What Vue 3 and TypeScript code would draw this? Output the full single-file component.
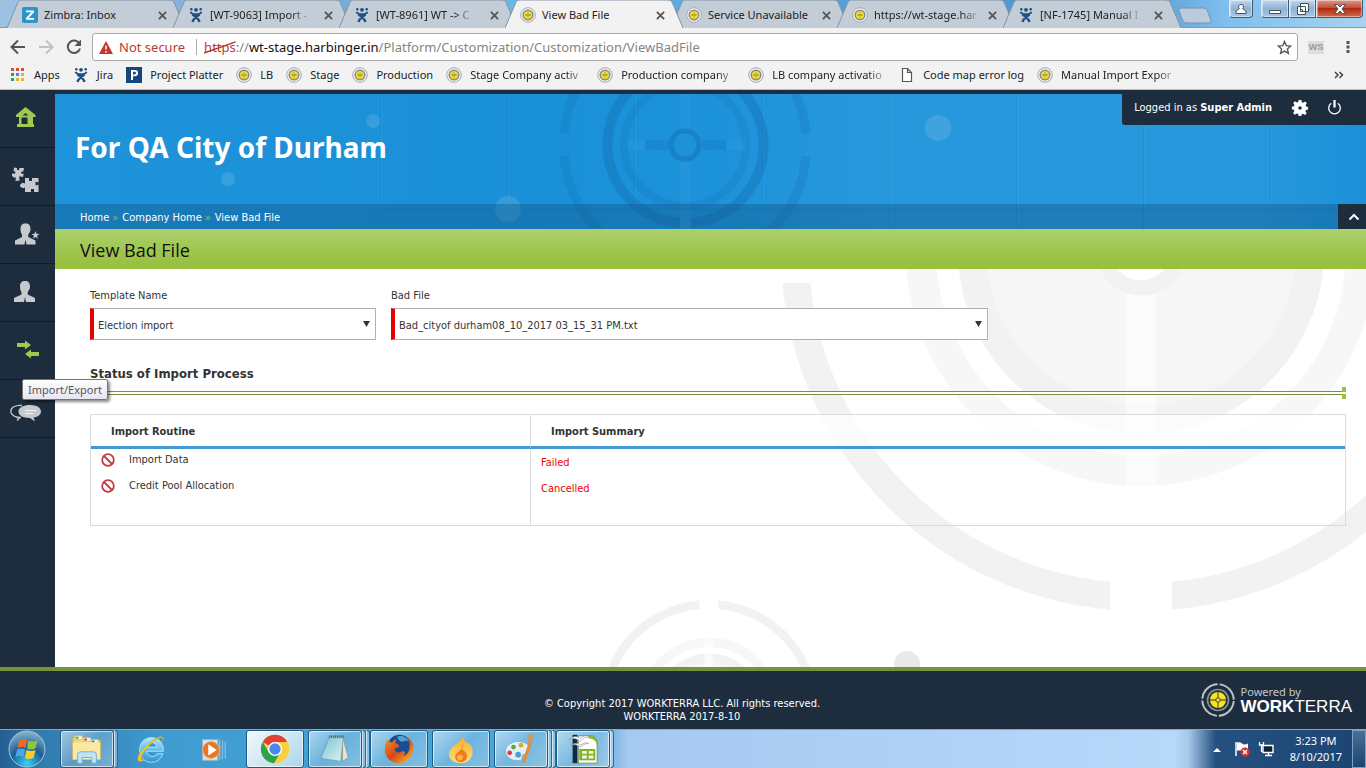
<script setup lang="ts">
import { ref } from 'vue'

type Tab = { title: string; icon: string; active?: boolean; faded?: boolean }
type Bookmark = { title: string; icon: string; faded?: boolean }
type Routine = { name: string; summary: string }

const tabs: Tab[] = [
  { title: 'Zimbra: Inbox', icon: 'zimbra' },
  { title: '[WT-9063] Import -', icon: 'jira', faded: true },
  { title: '[WT-8961] WT -> C', icon: 'jira', faded: true },
  { title: 'View Bad File', icon: 'target', active: true },
  { title: 'Service Unavailable', icon: 'target' },
  { title: 'https://wt-stage.har', icon: 'target', faded: true },
  { title: '[NF-1745] Manual I', icon: 'jira', faded: true },
]

const bookmarks: Bookmark[] = [
  { title: 'Apps', icon: 'apps' },
  { title: 'Jira', icon: 'jira' },
  { title: 'Project Platter', icon: 'platter' },
  { title: 'LB', icon: 'target' },
  { title: 'Stage', icon: 'target' },
  { title: 'Production', icon: 'target' },
  { title: 'Stage Company activ', icon: 'target', faded: true },
  { title: 'Production company', icon: 'target', faded: true },
  { title: 'LB company activatio', icon: 'target', faded: true },
  { title: 'Code map error log', icon: 'file' },
  { title: 'Manual Import Expor', icon: 'target', faded: true },
]

const menu = [
  { label: 'Home', icon: 'home' },
  { label: 'Modules', icon: 'puzzle' },
  { label: 'Administrators', icon: 'userstar' },
  { label: 'Employees', icon: 'user' },
  { label: 'Import/Export', icon: 'swap' },
  { label: 'Messages', icon: 'chat' },
]

const routines: Routine[] = [
  { name: 'Import Data', summary: 'Failed' },
  { name: 'Credit Pool Allocation', summary: 'Cancelled' },
]

const apps = [
  { label: 'Windows Explorer', icon: 'explorer', open: true, stack: 1 },
  { label: 'Internet Explorer', icon: 'ie' },
  { label: 'Media Player', icon: 'media' },
  { label: 'Google Chrome', icon: 'chrome', open: true, current: true },
  { label: 'Notepad', icon: 'notepad', open: true, stack: 2 },
  { label: 'Firefox', icon: 'firefox', open: true },
  { label: 'Flame', icon: 'flame', open: true },
  { label: 'Paint', icon: 'paint', open: true, stack: 2 },
  { label: 'Calc', icon: 'calc', open: true, stack: 1 },
]

const seams = [380, 507, 634, 762, 889, 1016, 1143, 1270]
const address = ref('wt-stage.harbinger.in')
const template = ref('Election import')
const badFile = ref('Bad_cityof durham08_10_2017 03_15_31 PM.txt')
</script>

<template>
  <div class="screen">
    <svg class="defs" aria-hidden="true">
      <defs>
        <linearGradient id="tb" x1="0" y1="0" x2="0" y2="1"><stop offset="0" stop-color="#a5e8ff" /><stop offset="1" stop-color="#2a93dc" /></linearGradient>
        <linearGradient id="sheet" x1="0" y1="0" x2="1" y2="1"><stop offset="0" stop-color="#7cc3cf" /><stop offset="1" stop-color="#d9f3f4" /></linearGradient>
        <radialGradient id="orb" cx=".5" cy=".9" r=".9"><stop offset="0" stop-color="#35d3f5" /><stop offset=".5" stop-color="#1c5d96" /><stop offset="1" stop-color="#8fb6cc" /></radialGradient>
        <linearGradient id="fox" x1="0" y1="0" x2="1" y2="1"><stop offset="0" stop-color="#f7941e" /><stop offset=".5" stop-color="#d6471d" /><stop offset="1" stop-color="#fbc92e" /></linearGradient>
        <linearGradient id="fire" x1="0" y1="0" x2="0" y2="1"><stop offset="0" stop-color="#f7a623" /><stop offset="1" stop-color="#fde07a" /></linearGradient>
      </defs>
      <symbol id="i-zimbra" viewBox="0 0 16 16"><rect width="16" height="16" rx="2" fill="#2c94c9" /><path d="M4 3.500h8v1.800L6.700 11H12v1.800H4V11l5.300-5.700H4z" fill="#fff" /></symbol>
      <symbol id="i-jira" viewBox="0 0 16 16"><circle cx="8" cy="2.800" r="1.900" fill="#205081" /><circle cx="3.300" cy="2.200" r="1.300" fill="#205081" /><circle cx="12.700" cy="2.200" r="1.300" fill="#205081" /><path d="M2.500 4.800c.8 2 3 2.200 5.500 4.200 2.500-2 4.700-2.200 5.500-4.200" fill="none" stroke="#205081" stroke-width="1.900" /><path d="M5 6.300h6L8 9.500z" fill="#205081" /><path d="M11.500 7.500C9 9.500 5 11.500 4.600 15M4.500 7.500C7 9.500 11 11.500 11.400 15" fill="none" stroke="#205081" stroke-width="2.300" /></symbol>
      <symbol id="i-target" viewBox="0 0 16 16"><circle cx="8" cy="8" r="7.300" fill="#f3f3f1" stroke="#a8a8a8" stroke-width="1" /><circle cx="8" cy="8" r="4.800" fill="#eadc3a" stroke="#8c8c88" stroke-width="1.500" /><path d="M5.500 8h5" stroke="#8f8122" stroke-width="1.200" /><path d="M8 4.500v7" stroke="#c4b42b" stroke-width="1" /></symbol>
      <symbol id="i-apps" viewBox="0 0 16 16"><path d="M1 1h3v3H1zM6 1h3v3H6zM11 1h3v3h-3z" fill="#dd4b39" /><path d="M1 6h3v3H1z" fill="#23a566" /><path d="M6 6h3v3H6z" fill="#4587f3" /><path d="M11 6h3v3h-3zM6 11h3v3H6zM11 11h3v3h-3z" fill="#efb02b" /><path d="M1 11h3v3H1z" fill="#23a566" /></symbol>
      <symbol id="i-platter" viewBox="0 0 16 16"><rect width="16" height="16" fill="#14457d" /><path d="M5 3h4a3 3 0 0 1 0 6.200H7V13H5zM7 4.800v2.600h1.600a1.300 1.300 0 0 0 0-2.600z" fill="#fff" fill-rule="evenodd" /></symbol>
      <symbol id="i-file" viewBox="0 0 16 16"><path d="M3.500 1.500h5l4 4v9h-9zM8.500 1.500v4h4" fill="#fff" stroke="#555" stroke-width="1.200" /></symbol>

      <symbol id="i-home" viewBox="0 0 32 32"><path d="M15.500 4l10 8v2h-2.500v7h1v3H7v-3h2v-7H6v-2zM11.500 14.500V21h6v-6.500zM12.500 12.500h6l-3-2.500z" fill="#a0c950" fill-rule="evenodd" /></symbol>
      <symbol id="i-puzzle" viewBox="0 0 32 32"><g transform="translate(0 4)" fill="#c6cacf"><path d="M4 2.500l3 .5v2h2l.5-2H14l-.7 3.500h-2v2.300h2.400L13 12l-3.500-.8-.3 2 .6 2.300-4.300.5.400-3.500H3.500L2 10.500V8.500l3 .3.500-2L3.600 6z" /><path d="M15 13h4v3h3v-3h6.500v4.500l-3-.8v3.800l3-.8V27H24v-3h-3v3h-6v-4.500l-2 .8-2.800-1.500v-2.300l2.300-1.700 2.500.7z" /></g></symbol>
      <symbol id="i-user" viewBox="0 0 32 32"><path d="M15 4c3.500 0 5 2 5 5.500 0 2-1 4-2.300 5.500v2.500L25 21v4H16l-1-5-1 5H4v-4l7.500-3.500V15C10.500 14 10 11.500 10 9.500 10 6 11.500 4 15 4z" fill="#c6cacf" /></symbol>
      <symbol id="i-userstar" viewBox="0 0 32 32"><path d="M15.500 4.500c3.500 0 5 2 5 5.500 0 2-1 4-2.300 5.500V18l7.300 3.500v4H16.500l-1-5-1 5H5v-4L12 18v-2.500C11 14.500 10.500 12 10.500 10c0-3.500 1.500-5.500 5-5.500z" fill="#c6cacf" /><path d="M25.500 12l1 2.800 3 .1-2.400 1.900.9 2.900-2.500-1.700-2.500 1.700.9-2.900-2.400-1.900 3-.1z" fill="#c6cacf" /></symbol>
      <symbol id="i-swap" viewBox="0 0 32 32"><path d="M7 8h8V5.500l6 4.500-6 4.500v-2.500H7zM29 17h-8v-2.500l-6 4.500 6 4.500v-2.500h8z" fill="#a0c950" /></symbol>
      <symbol id="i-chat" viewBox="0 0 32 32"><g transform="translate(0 3)"><path d="M12 9.500C5 8.500.8 12 .8 15.500c0 2.500 2 4 5.200 5.500 2 .5 2 .5 4 .5l-3 3" fill="none" stroke="#c6cacf" stroke-width="1.300" /><path d="M20 9c6.500 0 11 2.800 11 6.500 0 3-3 5.500-7.500 6l1.500 4-5-3.600C13 22 8.500 19.500 8.500 15.500S13.500 9 20 9z" fill="#c6cacf" /><path d="M15 14.500h11M15 17.500h8" stroke="#f2f3f4" stroke-width="1.200" /></g></symbol>

      <symbol id="i-explorer" viewBox="0 0 36 36"><path d="M3 6h11l2 3h16v20H3z" fill="#f1d77c" stroke="#d7b14c" /><path d="M5 4h8v4H5zM14 6h8v4h-8zM22 8h8v4h-8z" fill="#fbf3d0" stroke="#d3b765" stroke-width=".6" /><path d="M6 5h3v2H6z" fill="#36b034" /><path d="M15 7h3v2h-3z" fill="#d4442d" /><path d="M23 9h3v2h-3z" fill="#2f7ed0" /><path d="M3 11h29v18H3z" fill="#fae9a4" /><path d="M8 33V24q0-3 3-3h14q3 0 3 3v9h-5v-6H13v6z" fill="#bfe4f5" stroke="#69b4d9" /></symbol>
      <symbol id="i-ie" viewBox="0 0 36 36"><path d="M31 20.500H13.500c.5 6.500 9 7 11 2.500H30.500c-2 6-6.500 9-12 9C10.500 32 6 26.500 6 19S11 6 18.500 6 31.500 11 31 20.500zM13.700 16h10.600c-.5-6-9.800-6.500-10.600 0z" fill="url(#tb)" stroke="#e2f7ff" stroke-width=".7" fill-rule="evenodd" /><path d="M30.500 11c2.500-6-1-8-7.500-4C14 12 5 22 4 28c-.5 4 4 4 8 1-4 1-6 0-4-4C12 17 21 8.500 26.500 6.500c4-1 5 .5 4 4.500z" fill="#f5c92b" stroke="#d19b17" stroke-width=".5" /></symbol>
      <symbol id="i-media" viewBox="0 0 36 36"><path d="M7 8h16v22H7z" fill="#d5e5ef" stroke="#91b8cd" /><path d="M25 8v22M28 9v20M31 10v18" stroke="#8bb9d4" stroke-width="1.500" /><circle cx="16" cy="19" r="9" fill="#e87722" stroke="#f7b37c" /><path d="M13 13l9 6-9 6z" fill="#fff" /></symbol>
      <symbol id="i-chrome" viewBox="0 0 36 36"><circle cx="18" cy="18" r="15" fill="#fcce3c" /><path d="M18 18L5 10.500A15 15 0 0 1 31 10.500H18z" fill="#dd4437" /><path d="M5 10.500A15 15 0 0 0 17 33l6.500-11.200L18 18l-6.500 3.800z" fill="#2ba24c" /><circle cx="18" cy="18" r="7.500" fill="#fff" /><circle cx="18" cy="18" r="6" fill="#4886f0" /></symbol>
      <symbol id="i-notepad" viewBox="0 0 36 36"><path d="M26 5l6 22-6 4z" fill="#e9e3cf" stroke="#92877a" stroke-width=".6" /><path d="M12 5h15L24 31 3 28z" fill="url(#sheet)" stroke="#628a91" stroke-width=".6" /><path d="M12 5h15" stroke="#566" stroke-width="3" stroke-dasharray="1 1" /></symbol>
      <symbol id="i-firefox" viewBox="0 0 36 36"><circle cx="18.500" cy="16" r="13" fill="#1d4c8e" /><path d="M16 5c4-2 10 0 12 5-4-2-5 1-8 0-2-1-3-2-4-5z" fill="#4fa2d8" /><path d="M6 8c1 2 3 3 5 3 1-2 2-3 4-3l-1 4c3 1 5 2 4 4l-5 2c2 5 7 4 9 2 3 0 3 3 0 5 4 0 7-4 7-8 1-5-1-9-4-12 6 2 9 8 8 14-1 8-7 14-15 14S3 27 3 19C3 15 4 11 6 8z" fill="url(#fox)" /></symbol>
      <symbol id="i-flame" viewBox="0 0 36 36"><path d="M20 2c-2 4 1 7 6 10 8 6 5 21-8 21C6 33 3 24 7 18 11 12 20 11 20 2z" fill="url(#fire)" /><path d="M20 14c-4 4 2 5 4 9 2 5-2 9-6 9-5 0-8-5-5-9 2-3 7-4 7-9z" fill="#ee7b1e" /><circle cx="17" cy="27" r="3" fill="#fbb441" /></symbol>
      <symbol id="i-paint" viewBox="0 0 36 36"><path d="M3 25C-2 17 6 10 15 10c8 0 13 4 12 10-1 5-5 3-7 4s1 6-4 6c-5 1-10-1-13-5z" fill="#e1eff8" stroke="#84aecb" /><circle cx="6" cy="22" r="2.500" fill="#d93c3c" /><circle cx="10" cy="16" r="2.500" fill="#59a83c" /><circle cx="18" cy="14" r="2.500" fill="#e4a51d" /><circle cx="15" cy="24" r="3" fill="#519dd0" /><path d="M27 9l3 2-8 22-3-1z" fill="#e58b34" /><path d="M26 3c4-2 7 0 5 3l-2 6-4-2c1-3-1-4 1-7z" fill="#c79873" /></symbol>
      <symbol id="i-calc" viewBox="0 0 36 36"><path d="M7 3h5v30H7z" fill="#132941" /><path d="M13 4h16l4 6v23H13z" fill="#fff" stroke="#758c55" /><path d="M24 4h5l4 6v5C32 9 29 7 24 7z" fill="#84ba2c" /><path d="M14 18h17v12H14z" fill="#82b329" /><path d="M17 20h5v3h-5zM24 20h5v3h-5zM17 25h5v3h-5zM24 25h5v3h-5z" fill="#f2f8df" /><path d="M3 8q7-6 12-1 5-5 9-2-5 0-9 5-5-5-12-2M5 14q6-4 10 0 5-4 9-2-5 0-9 4-4-4-10-2" fill="#fff" stroke="#7b8a92" stroke-width=".6" /></symbol>
    </svg>

    <!-- Browser frame -->
    <header class="browser">
      <div class="tabstrip">
        <nav class="tabs" aria-label="Tabs">
          <div v-for="tab in tabs" :key="tab.title" class="tab" :class="{ active: tab.active }">
            <svg class="tab-shape" viewBox="0 0 178 28" preserveAspectRatio="none"><path d="M0 28L11 2q1-2 3-2h149q3 0 4 2l11 26" vector-effect="non-scaling-stroke" /></svg>
            <svg class="fav"><use :href="'#i-' + tab.icon" /></svg>
            <a href="#" class="tab-title"><span :class="{ faded: tab.faded }">{{ tab.title }}</span></a>
            <button class="tab-close" aria-label="Close tab"><svg viewBox="0 0 10 10"><path d="M1 1l8 8M9 1L1 9" /></svg></button>
          </div>
        </nav>
        <button class="new-tab" aria-label="New tab"><svg viewBox="0 0 34 17"><path d="M3 1h22q3 0 4 2l4 10q1 3-2 3H9q-3 0-4-2L1 4q-1-3 2-3z" /></svg></button>
        <div class="window-controls">
          <button class="wc person" aria-label="Profile"><svg viewBox="0 0 12 12"><path d="M6 1.500a2.200 2.200 0 0 1 1.500 4L11 8v2.500H1V8l3.500-2.500A2.200 2.200 0 0 1 6 1.500z" /></svg></button>
          <button class="wc mini" aria-label="Minimize"><svg viewBox="0 0 14 12"><path d="M1.500 7.500h11v3h-11z" /></svg></button>
          <button class="wc restore" aria-label="Restore"><svg viewBox="0 0 14 12"><path d="M4.500 .5h8v8h-8zM1.500 3.500h8v8h-8zM4.500 6.500h2v2h-2z" /></svg></button>
          <button class="wc close" aria-label="Close"><svg viewBox="0 0 14 12"><path d="M1.500 1.500h3L7 4l2.500-2.500h3L9 6l3.500 4.500h-3L7 8l-2.500 2.500h-3L5 6z" /></svg></button>
        </div>
      </div>

      <div class="toolbar">
        <button class="tool" aria-label="Back"><svg viewBox="0 0 16 16"><path d="M15 8H2M8 1.500L1.500 8 8 14.500" /></svg></button>
        <button class="tool dim" aria-label="Forward"><svg viewBox="0 0 16 16"><path d="M1 8h13M8 1.500L14.500 8 8 14.500" /></svg></button>
        <button class="tool" aria-label="Reload"><svg viewBox="0 0 16 16"><path d="M13.300 4.500A6.200 6.200 0 1 0 14 9.500" /><path d="M15 .5V7H8.500z" fill="#555" stroke="none" /></svg></button>
        <div class="omnibox">
          <svg class="warn" viewBox="0 0 14 13"><path d="M7 0l7 13H0z" fill="#c0392b" /><path d="M7 4.500v4M7 10v1.500" stroke="#fff" stroke-width="1.500" /></svg>
          <span class="insecure">Not secure</span>
          <span class="url" :title="address"><s class="scheme">https<svg viewBox="0 0 33 14" preserveAspectRatio="none"><path d="M0 13L33 1" /></svg></s><i>://</i>wt-stage.harbinger.in<i>/Platform/Customization/Customization/ViewBadFile</i></span>
          <button class="star" aria-label="Bookmark"><svg viewBox="0 0 16 16"><path d="M8 1.500l1.900 4.500 4.800.4-3.600 3.200 1.100 4.700L8 11.800l-4.200 2.500 1.100-4.700L1.300 6.400 6.100 6z" /></svg></button>
        </div>
        <button class="ws" aria-label="Extension">WS</button>
        <button class="dots" aria-label="Menu"><svg viewBox="0 0 4 14"><path d="M.5 1h3v3h-3zM.5 5.500h3v3h-3zM.5 10h3v3h-3z" /></svg></button>
      </div>

      <nav class="bookmarks" aria-label="Bookmarks">
        <a v-for="b in bookmarks" :key="b.title" href="#" class="bookmark">
          <svg class="fav"><use :href="'#i-' + b.icon" /></svg>
          <span :class="{ faded: b.faded, cut: b.faded }">{{ b.title }}</span>
        </a>
        <button class="more" aria-label="More bookmarks"><svg viewBox="0 0 10 8"><path d="M1 1l3 3-3 3M5.500 1l3 3-3 3" /></svg></button>
      </nav>
    </header>

    <!-- Web page -->
    <div class="page">
      <nav class="sidebar" aria-label="Main menu">
        <a v-for="m in menu" :key="m.label" href="#" class="side-item" :aria-label="m.label">
          <svg><use :href="'#i-' + m.icon" /></svg>
          <span v-if="m.label === 'Import/Export'" class="tooltip" role="tooltip">{{ m.label }}</span>
        </a>
      </nav>

      <main class="main">
        <section class="banner">
          <svg class="banner-art" viewBox="55 94 1311 135" preserveAspectRatio="xMinYMin slice" aria-hidden="true">
            <g v-for="x in seams" :key="x"><path :d="`M${x}.5 94v135`" stroke="#0d7fc4" stroke-opacity=".3" /><path :d="`M${x + 1}.5 94v135`" stroke="#57b2e8" stroke-opacity=".2" /></g>
            <path d="M380 209.500h986" stroke="#0d6ba8" stroke-opacity=".3" />
            <g fill="none" stroke="#136fae">
              <path d="M564 134A121.500 121.500 0 0 1 674 24M696 24A121.500 121.500 0 0 1 806 134M806 156A121.500 121.500 0 0 1 696 266M674 266A121.500 121.500 0 0 1 564 156" stroke-width="9" stroke-opacity=".25" />
              <path d="M680 223A78 78 0 1 1 691 223" stroke-width="10" stroke-opacity=".4" />
              <circle cx="685" cy="145" r="61" stroke-width="8" stroke-opacity=".2" />
              <circle cx="685" cy="145" r="14" stroke-width="5" stroke-opacity=".45" />
              <path d="M645 145h24M702 145h24" stroke-width="10" stroke-opacity=".22" />
            </g>
            <path d="M627 140h18v10h-18zM727 140h18v10h-18zM680 162h11v67h-11zM680 94h11v34h-11z" fill="#3aa5e4" fill-opacity=".22" />
            <g fill="#8fcaf0" fill-opacity=".24"><circle cx="373" cy="121" r="7" /><circle cx="228" cy="179" r="7" /><circle cx="508" cy="209" r="13" /><circle cx="938" cy="128" r="13" /></g>
          </svg>
          <div class="session">
            <span>Logged in as <b>Super Admin</b></span>
            <button aria-label="Settings"><svg viewBox="0 0 20 20"><path d="M8.500 1h3l.5 2.500 1.500.6 2.100-1.400 2 2-1.400 2.200.6 1.400 2.200.5v2.800l-2.300.5-.7 1.500 1.500 2.200-2 2-2.200-1.500-1.400.7L11.500 19h-3L8 16.800l-1.500-.6-2.200 1.400-2-2 1.500-2.200-.6-1.400L1 11.500V8.600L3.300 8l.6-1.400L2.500 4.500l2-2 2.100 1.400L8 3.400zM10 8a2 2 0 1 0 0 4 2 2 0 0 0 0-4z" fill="#fff" fill-rule="evenodd" /></svg></button>
            <button class="power" aria-label="Log out"><svg viewBox="0 0 16 18"><path d="M4.500 4.500a6.200 6.200 0 1 0 7 0" fill="none" stroke="#fff" stroke-width="1.400" /><path d="M8 1v8" stroke="#fff" stroke-width="2.400" /></svg></button>
          </div>
          <h1>For QA City of Durham</h1>
          <div class="crumb-bar">
            <nav class="crumbs" aria-label="Breadcrumb">
              <a href="#">Home</a><em>»</em><a href="#">Company Home</a><em>»</em><a href="#">View Bad File</a>
            </nav>
            <button class="collapse" aria-label="Collapse header"><svg viewBox="0 0 12 8"><path d="M1.500 6.500L6 2l4.500 4.500" /></svg></button>
          </div>
        </section>

        <h2 class="page-title">View Bad File</h2>

        <section class="content">
          <svg class="content-art" viewBox="55 269 1311 398" preserveAspectRatio="xMinYMin slice" aria-hidden="true">
            <defs>
              <mask id="gaps" maskUnits="userSpaceOnUse" x="-370" y="-370" width="740" height="740">
                <path d="M-370 -370h740v740h-740z" fill="#fff" />
                <path d="M-31 -370h62v740h-62zM-370 -32h740v64h-740z" fill="#000" />
              </mask>
              <g id="rings">
                <circle r="346" fill="none" stroke="#f2f2f2" stroke-width="28" mask="url(#gaps)" />
                <circle r="220" fill="none" stroke="#f7f7f7" stroke-width="30" />
                <circle r="183" fill="#f2f2f2" /><circle r="155" fill="#f6f6f6" />
                <path d="M-15 -235h30v470h-30z" fill="#fff" fill-opacity=".5" />
                <circle r="37" fill="#fff" stroke="#f2f2f2" stroke-width="15" />
              </g>
            </defs>
            <use href="#rings" transform="translate(1141 251)" />
            <use href="#rings" transform="translate(709 709) scale(.303)" />
            <circle cx="907" cy="664" r="13" fill="#e9e9ea" />
          </svg>
          <form class="filters" @submit.prevent>
            <div class="field">
              <label for="template">Template Name</label>
              <div class="picker">
                <select id="template" v-model="template"><option>Election import</option></select>
                <svg viewBox="0 0 8 7"><path d="M0 0h8L4 7z" /></svg>
              </div>
            </div>
            <div class="field wide">
              <label for="badfile">Bad File</label>
              <div class="picker">
                <select id="badfile" v-model="badFile"><option>Bad_cityof durham08_10_2017 03_15_31 PM.txt</option></select>
                <svg viewBox="0 0 8 7"><path d="M0 0h8L4 7z" /></svg>
              </div>
            </div>
          </form>
          <h3>Status of Import Process</h3>
          <div class="rule"><span></span></div>
          <table>
            <thead><tr><th scope="col">Import Routine</th><th scope="col">Import Summary</th></tr></thead>
            <tbody>
              <tr v-for="r in routines" :key="r.name">
                <td><span class="routine"><svg viewBox="0 0 14 14"><circle cx="7" cy="7" r="5.800" /><path d="M3 3l8 8" /></svg>{{ r.name }}</span></td>
                <td class="bad">{{ r.summary }}</td>
              </tr>
              <tr class="filler"><td></td><td></td></tr>
            </tbody>
          </table>
        </section>
      </main>
    </div>

    <footer class="footer">
      <p>© Copyright 2017 WORKTERRA LLC. All rights reserved.<br />WORKTERRA 2017-8-10</p>
      <div class="brand">
        <svg viewBox="0 0 34 34">
          <g fill="none"><circle cx="17" cy="17" r="15.700" stroke="#bcc3cb" stroke-width="2" stroke-dasharray="22.700 2" stroke-dashoffset="-1" /><circle cx="17" cy="17" r="10.500" stroke="#8a9199" stroke-width="1.600" /></g>
          <circle cx="17" cy="17" r="8" fill="#f4e51f" /><path d="M17 9v16M9 17h16" stroke="#6f6a23" stroke-width="1.300" /><circle cx="17" cy="17" r="2.200" fill="#f4e51f" stroke="#4b4c2a" />
        </svg>
        <div><small>Powered by</small><strong>WORK<span>TERRA</span></strong></div>
      </div>
    </footer>

    <!-- Desktop taskbar -->
    <nav class="taskbar" aria-label="Taskbar">
      <button class="start" aria-label="Start">
        <svg viewBox="0 0 38 38"><circle cx="19" cy="19" r="18" fill="url(#orb)" stroke="#9cc8de" /><path d="M11 10q4-2 8 0l-1.500 8q-4-2-8 0z" fill="#ea6a2c" /><path d="M20.500 10.500q4 2 9 0l-2 8q-5 2-8.500 0z" fill="#90c63e" /><path d="M9 19.500q4-2 8 0L15.500 27q-4-2-8 0z" fill="#4aa8e0" /><path d="M18.500 20q4 2 9 0l-2 8q-5 2-8.500 0z" fill="#fbcd34" /></svg>
      </button>
      <div class="apps">
        <div v-for="a in apps" :key="a.label" class="app-slot">
          <button class="app" :class="{ open: a.open, current: a.current }" :aria-label="a.label"><svg><use :href="'#i-' + a.icon" /></svg></button>
          <span v-for="n in a.stack ?? 0" :key="n" class="stack"></span>
        </div>
      </div>
      <div class="tray">
        <svg class="up" viewBox="0 0 8 5"><path d="M0 5l4-4 4 4z" fill="#fff" /></svg>
        <svg class="ticon" viewBox="0 0 16 16"><path d="M2 1v14" stroke="#fff" stroke-width="1.500" /><path d="M3 1.500q3-1 5 1t6 0v7H3z" fill="#fff" /><circle cx="11" cy="11" r="4.500" fill="#d93025" /><path d="M9 9l4 4M13 9l-4 4" stroke="#fff" stroke-width="1.400" /></svg>
        <svg class="ticon" viewBox="0 0 16 16"><path d="M5 4.500h10v7H5zM7 14.500h7M10.500 12v2" fill="#123" stroke="#fff" stroke-width="1.400" /><path d="M1.500 1v3h4V1M3.500 4v7" fill="none" stroke="#fff" stroke-width="1.300" /></svg>
        <time>3:23 PM<br />8/10/2017</time>
        <button class="peek" aria-label="Show desktop"></button>
      </div>
    </nav>
  </div>
</template>

<style>
body { margin: 0; }
</style>

<style scoped>
.screen { --navy: #1e2d3e; --ui: "Noto Sans", "Open Sans", sans-serif; --body: "DejaVu Sans Condensed", "DejaVu Sans", sans-serif; min-height: 100vh; display: flex; flex-direction: column; font: 11px/14px var(--body); color: #333; overflow-x: hidden; }
*, *::before, *::after { box-sizing: border-box; }
button { padding: 0; border: 0; background: none; font: inherit; color: inherit; display: grid; place-items: center; }
a { color: inherit; text-decoration: none; }
h1, h2, h3, p { margin: 0; }
svg { display: block; }
.defs { position: absolute; width: 0; height: 0; }
.fav { width: 16px; height: 16px; flex: none; }
.faded { mask-image: linear-gradient(90deg, #000 84%, #0003); }

.browser { font: 12px/16px var(--ui); color: #222; }
.tabstrip { display: flex; height: 28px; padding-left: 7px; background: linear-gradient(90deg, #9fc2e3, #7ba9d3 20%, #68b9e8 38%, #579fd6 60%, #4f95cf 82%, #7fc0ee 90%, #a9d2ef); border-bottom: 1px solid #8c9aa8; }
.tabs { display: flex; flex: 0 1 1162px; min-width: 0; }
.tab { position: relative; flex: 1 1 0; min-width: 0; margin-right: -12px; padding: 2px 18px 0 15px; display: flex; align-items: center; gap: 6px; height: 28px; font-size: 11px; }
.tab-shape { position: absolute; inset: 0; width: 100%; height: 100%; fill: #c3cdd8; stroke: #8393a3; }
.tab .fav, .tab-title, .tab-close { position: relative; }
.tab-title { flex: 1; min-width: 0; white-space: nowrap; }
.tab-title span { display: inline-block; }
.tab-close { width: 9px; height: 9px; }
.tab-close svg { width: 9px; height: 9px; stroke: #555; stroke-width: 2; }
.active { z-index: 1; }
.active .tab-shape { fill: #f2f2f2; }
.new-tab { width: 34px; height: 17px; margin: 7px 0 0 9px; }
.new-tab svg { width: 34px; height: 17px; fill: #b9cbdc; stroke: #7c93aa; }
.window-controls { display: flex; margin-left: auto; padding-right: 3px; }
.wc { height: 18px; border: 1px solid #3f5a78; border-top: 0; border-left-color: #dcebf7; background: linear-gradient(#c2d9ec, #8fb3d3 50%, #a6c8e4); box-shadow: inset 0 0 0 1px #ffffff70; }
.wc svg { width: 14px; height: 12px; fill: #fff; stroke: #46515e; }
.person { width: 24px; margin-right: 8px; border-radius: 0 0 4px 4px; }
.mini { width: 28px; border-radius: 0 0 0 4px; }
.restore { width: 27px; }
.close { width: 47px; border-radius: 0 0 4px; background: linear-gradient(#dd9a8b, #c14a34 48%, #b02a12 50%, #d36a4a); }

.toolbar { display: flex; align-items: center; height: 38px; padding: 0 16px 0 10px; background: #f2f2f2; }
.tool { width: 16px; height: 16px; margin-right: 12px; }
.tool svg { width: 16px; height: 16px; fill: none; stroke: #555; stroke-width: 2; }
.tool + .tool + .tool { margin-right: 10px; }
.dim { opacity: .3; }
.omnibox { flex: 1; min-width: 0; height: 28px; display: flex; align-items: center; padding: 0 5px 0 6px; border: 1px solid #a9a9a9; border-radius: 3px; background: #fff; font-size: 13px; }
.warn { width: 14px; height: 13px; margin-right: 6px; flex: none; }
.insecure { color: #c0392b; padding-right: 11px; border-right: 1px solid #aaa; margin-right: 7px; white-space: nowrap; }
.url { flex: 1; color: #111; white-space: nowrap; overflow: hidden; }
.url i { font-style: normal; color: #858585; }
.scheme { position: relative; color: #c0392b; text-decoration: none; }
.scheme svg { position: absolute; left: 0; top: 3px; width: 100%; height: 13px; stroke: #b5382b; stroke-width: 1.5; }
.star svg { width: 15px; height: 15px; fill: none; stroke: #555; stroke-width: 1.4; }
.ws { width: 16px; height: 13px; margin: 0 22px 0 10px; background: #ddd; color: #999; font: bold 9px/13px "Liberation Sans", sans-serif; }
.dots svg { width: 4px; height: 14px; fill: #555; }
.bookmarks { display: flex; align-items: center; gap: 13px; height: 24px; padding: 0 22px 6px 10px; background: #f2f2f2; border-bottom: 1px solid #bbb; font-size: 11px; }
.bookmark { display: flex; align-items: center; gap: 8px; white-space: nowrap; }
.cut { min-width: 114px; }
.more { margin-left: auto; }
.more svg { width: 10px; height: 8px; fill: none; stroke: #444; stroke-width: 1.5; }

.page { flex: 1; display: flex; background: #fff; }
.sidebar { width: 55px; flex: none; background: var(--navy); z-index: 2; }
.side-item { position: relative; display: grid; place-items: center; height: 58px; border-bottom: 1px solid #101b27; padding-right: 4px; }
.side-item svg { width: 32px; height: 32px; }
.tooltip { position: absolute; left: 22px; top: 57px; z-index: 3; padding: 1px 5px; border: 1px solid #767676; border-radius: 2px; background: linear-gradient(#fff, #e4e5f0); box-shadow: 2px 2px 3px #0007; color: #575757; font: 11px/17px var(--ui); }
.main { flex: 1; min-width: 0; display: flex; flex-direction: column; }
.banner { position: relative; display: flex; flex-direction: column; height: 139px; border-top: 4px solid var(--navy); background: linear-gradient(90deg, #1e93da, #1a90d8 35%, #1c92da 50%, #2898dc 62%, #2898dc 92%, #1a90d9); color: #fff; }
.banner-art, .content-art { position: absolute; inset: 0; width: 100%; height: 100%; }
.session { position: absolute; right: 0; top: -4px; display: flex; align-items: center; height: 35px; padding: 0 24px 0 12px; border-radius: 0 0 0 3px; background: var(--navy); }
.session button { margin-left: 19px; }
.session .power { margin-left: 18px; }
.session svg { width: 18px; height: 18px; }
.session .power svg { width: 15px; height: 17px; }
h1 { position: relative; flex: 1; padding: 36px 20px 0; font: bold 28px/34px var(--ui); }
.crumb-bar { position: relative; display: flex; height: 25px; background: #12568566; }
.crumbs { flex: 1; display: flex; align-items: center; padding: 2px 0 0 25px; white-space: nowrap; }
.crumbs em { color: #8cc152; font-style: normal; margin: 0 4px 0 3px; }
.collapse { width: 28px; padding-left: 4px; background: var(--navy); }
.collapse svg { width: 12px; height: 8px; fill: none; stroke: #fff; stroke-width: 2; }
.page-title { height: 40px; padding: 2px 25px 0; background: linear-gradient(#aed06d, #9cc44a 65%, #96c03f); color: #111; font: 18px/38px "Open Sans", sans-serif; }
.content { position: relative; flex: 1; padding: 20px 20px 20px 35px; }
.filters { position: relative; display: flex; gap: 15px; }
.field { flex: 0 1 286px; }
.wide { flex-basis: 597px; }
.field label { display: block; margin-bottom: 5px; }
.picker { position: relative; }
.picker select { display: block; appearance: none; width: 100%; height: 32px; padding: 4px 24px 0 4px; border: 1px solid #acb1b5; border-left: 4px solid #e60000; border-radius: 0; background: #fff; color: #333; font: inherit; }
.picker svg { position: absolute; right: 6px; top: 13px; width: 7px; height: 6px; fill: #333; }
h3 { position: relative; margin-top: 25px; font: bold 13px/18px var(--body); }
.rule { position: relative; height: 4px; margin-top: 8px; border: solid #76933c; border-width: 1px 0; background: #fff; }
.rule span { position: absolute; right: 0; top: -5px; width: 4px; height: 12px; background: linear-gradient(#96c040 5px, #fff 5px 7px, #96c040 7px); }
table { position: relative; width: 100%; margin-top: 19px; border-collapse: separate; border-spacing: 0; table-layout: fixed; border: 1px solid #d9dbdc; }
th { height: 34px; padding: 2px 20px 0; text-align: left; border-bottom: 3px solid #4299d6; background: #ffffffb0; }
th:first-child, td:first-child { width: 440px; border-right: 1px solid #d9dbdc; }
td { height: 26px; padding: 2px 10px 0; }
td.bad { color: #f00000; }
.routine { display: flex; align-items: center; gap: 14px; margin-top: -7px; }
.routine svg { width: 14px; height: 14px; fill: #fff; stroke: #c8373f; stroke-width: 1.8; }
.filler td { height: 24px; }

.footer { display: grid; grid-template-columns: 1fr auto 1fr; align-items: center; height: 62px; padding: 0 14px 0 12px; border-top: 4px solid #76933c; background: var(--navy); color: #fff; }
.footer p { grid-column: 2; text-align: center; line-height: 13px; padding-top: 19px; }
.brand { justify-self: end; display: flex; align-items: center; gap: 6px; }
.brand svg { width: 34px; height: 34px; }
.brand small { display: block; font: 11px/13px var(--ui); color: #c3c8ce; }
.brand strong { display: block; font: bold 17px/18px "Liberation Sans", sans-serif; }
.brand strong span { font-weight: normal; }

.taskbar { display: flex; align-items: center; height: 39px; border-top: 1px solid #7aa9cc; background: linear-gradient(90deg, #245f93, #317bae 3%, #3f9bd0 12%, #4ba4d8 35%, #61acd9 44%, #a6c9f0 46%, #b8d8fa 86%, #a7c7e8 87%, #24507f 89%, #1c4573); }
.start { width: 54px; flex: none; }
.start svg { width: 38px; height: 38px; }
.apps { display: flex; padding-left: 6px; flex: 1; }
.app-slot { display: flex; width: 62px; }
.app { width: 58px; height: 38px; border: 1px solid transparent; border-radius: 3px; }
.app svg { width: 34px; height: 34px; }
.open { border-color: #1b5a86; background: linear-gradient(135deg, #ffffff90, #ffffff30 50%, #ffffff50); box-shadow: inset 0 0 0 1px #ffffffa0; }
.current { background: linear-gradient(135deg, #fffffff0, #ffffff90); }
.app:has(+ .stack) { width: 54px; }
.stack { width: 4px; border: 1px solid #2a6c98; border-left-color: #ffffffa0; border-radius: 0 3px 3px 0; background: #ffffff50; }
.tray { display: flex; align-items: center; align-self: stretch; color: #fff; font: 11px/16px var(--ui); text-align: center; }
.up { width: 8px; height: 5px; margin-right: 13px; }
.ticon { width: 16px; height: 16px; margin-right: 8px; }
.tray time { margin: 0 10px 0 8px; }
.peek { align-self: stretch; width: 14px; border: 1px solid #7f9fc0; background: linear-gradient(#4a6f99, #1d4370); }
</style>
